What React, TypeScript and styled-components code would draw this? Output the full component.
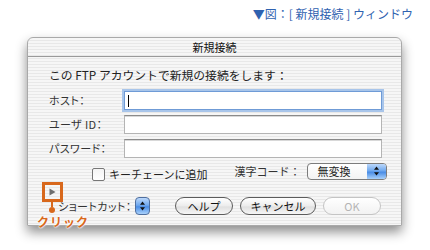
import React from 'react';
import styled, { createGlobalStyle, css } from 'styled-components';

const GlobalStyle = createGlobalStyle`
  html, body {
    margin: 0;
    padding: 0;
    background: #ffffff;
  }
  body {
    font-family: "Noto Sans CJK JP", "Noto Sans", sans-serif;
    color: #222;
  }
`;

const pinstripe = css`
  background: repeating-linear-gradient(
    to bottom,
    #f6f6f6 0,
    #f6f6f6 2px,
    #e8e8e8 2px,
    #e8e8e8 3px
  );
`;

const Page = styled.div`
  position: relative;
  width: 430px;
  height: 250px;
  overflow: hidden;
  padding-top: 6px;
  box-sizing: border-box;
`;

const Caption = styled.div`
  text-align: right;
  padding-right: 17px;
  color: #2f62b0;
  font-size: 12px;
  line-height: 16px;
`;

const Window = styled.div`
  margin: 15px 0 0 27px;
  width: 375px;
  box-sizing: border-box;
  border: 1px solid #a9a9a9;
  border-radius: 6px 6px 0 0;
  box-shadow: 0 6px 12px rgba(0, 0, 0, 0.45);
  ${pinstripe};
`;

const TitleBar = styled.div`
  height: 18px;
  border-bottom: 1px solid #9a9a9a;
  border-radius: 6px 6px 0 0;
  text-align: center;
  font-size: 11px;
  line-height: 18px;
  color: #111;
`;

const Body = styled.div`
  padding: 10px 20px 10px 21px;
  font-size: 11px;
  display: flex;
  flex-direction: column;
`;

const Intro = styled.div`
  font-size: 11.8px;
  line-height: 16px;
`;

const Fields = styled.div`
  margin-top: 8px;
  display: grid;
  grid-template-columns: 75px 258px;
  row-gap: 5px;
  align-items: center;
`;

const Label = styled.div`
  line-height: 19px;
  color: #333;
  font-feature-settings: "palt";
  letter-spacing: 0.4px;
`;

const Field = styled.div<{ $focused?: boolean }>`
  height: 19px;
  box-sizing: border-box;
  background: #fff;
  border: 1px solid #b4b4b4;
  border-top-color: #8a8a8a;
  box-shadow: inset 0 1px 0 #d8d8d8;
  position: relative;
  ${(p) =>
    p.$focused &&
    css`
      border-color: #6f9bd6;
      box-shadow: 0 0 0 2px #a8c5ea;
    `}
`;

const Caret = styled.span`
  position: absolute;
  left: 3px;
  top: 3px;
  width: 1px;
  height: 12px;
  background: #000;
`;

const Options = styled.div`
  margin-top: 4px;
  margin-right: -10px;
  display: flex;
  align-items: center;
  height: 18px;
  white-space: nowrap;

  & > * {
    flex-shrink: 0;
  }
`;

const CheckItem = styled.label`
  display: flex;
  align-items: center;
  gap: 4px;
  margin-left: 43px;
  margin-top: 6px;
`;

const CheckBox = styled.span`
  width: 11px;
  height: 11px;
  border: 1px solid #777;
  border-radius: 2px;
  background: linear-gradient(#f4f4f4, #ffffff);
`;

const CodeLabel = styled.span`
  margin-left: 27px;
  color: #333;
`;

const Popup = styled.div`
  margin-left: 7px;
  width: 80px;
  height: 17px;
  box-sizing: border-box;
  border: 1px solid #7c7c7c;
  border-radius: 4px;
  background: linear-gradient(#ffffff, #f3f3f3);
  display: flex;
  overflow: hidden;
`;

const PopupText = styled.span`
  flex: 1;
  padding-left: 9px;
  line-height: 15px;
`;

const BlueArrows = styled.span<{ $w: number }>`
  width: ${(p) => p.$w}px;
  display: flex;
  align-items: center;
  justify-content: center;
  background: linear-gradient(#bcd8fb 0%, #6fa8ee 45%, #4a8de6 55%, #a9d1fb 100%);
`;

const Footer = styled.div`
  margin-top: 17px;
  display: flex;
  align-items: center;
  height: 18px;
  white-space: nowrap;
`;

const ShortcutLabel = styled.span`
  margin-left: 9px;
  color: #333;
  font-feature-settings: "palt";
  letter-spacing: 0.4px;
`;

const Stepper = styled.span`
  margin-left: 3px;
  width: 15px;
  height: 18px;
  box-sizing: border-box;
  border: 1px solid #4f6f9f;
  border-radius: 4px;
  display: flex;
  align-items: center;
  justify-content: center;
  background: linear-gradient(#bcd8fb 0%, #6fa8ee 45%, #4a8de6 55%, #a9d1fb 100%);
`;

const Buttons = styled.div`
  margin-left: auto;
  display: flex;
  gap: 7px;
`;

const Button = styled.button<{ $w: number; $disabled?: boolean }>`
  width: ${(p) => p.$w}px;
  height: 18px;
  padding: 0;
  border: 1px solid #5c5c5c;
  border-radius: 9px;
  background: linear-gradient(#ffffff 0%, #ececec 50%, #e0e0e0 55%, #f6f6f6 100%);
  font-family: inherit;
  font-size: 11px;
  line-height: 16px;
  color: #111;
  ${(p) =>
    p.$disabled &&
    css`
      border-color: #c4c4c4;
      color: #b4b4b4;
      background: linear-gradient(#ffffff, #f2f2f2);
    `}
`;

const Callout = styled.div`
  position: absolute;
  left: 42px;
  top: 182px;
  width: 48px;
`;

const CalloutBox = styled.div`
  width: 21px;
  height: 20px;
  box-sizing: border-box;
  border: 3px solid #d8681c;
  display: flex;
  align-items: center;
  justify-content: center;
`;

const Stem = styled.div`
  margin-left: 9px;
  width: 2px;
  height: 5px;
  background: #d8681c;
`;

const Dot = styled.div`
  margin-left: 7px;
  width: 6px;
  height: 6px;
  border-radius: 50%;
  background: #d8681c;
`;

const ClickLabel = styled.div`
  margin: 2px 0 0 -5px;
  color: #d8681c;
  font-weight: bold;
  font-size: 12px;
  line-height: 14px;
  letter-spacing: 1px;
  white-space: nowrap;
  text-shadow: 0 0 2px #fff, 0 0 2px #fff, 0 0 2px #fff;
`;

const UpDown = () => (
  <svg width="7" height="10" viewBox="0 0 7 10">
    <path d="M3.5 0.5 L6 3.8 L1 3.8 Z" fill="#111" />
    <path d="M3.5 9.5 L6 6.2 L1 6.2 Z" fill="#111" />
  </svg>
);

const Disclosure = () => (
  <svg width="7" height="8" viewBox="0 0 7 8">
    <path d="M0.5 0.5 L6.5 4 L0.5 7.5 Z" fill="#6e6e6e" />
  </svg>
);

const App: React.FC = () => {
  return (
    <Page>
      <GlobalStyle />
      <Caption>▼図：[ 新規接続 ] ウィンドウ</Caption>
      <Window>
        <TitleBar>新規接続</TitleBar>
        <Body>
          <Intro>この FTP アカウントで新規の接続をします：</Intro>
          <Fields>
            <Label>ホスト：</Label>
            <Field $focused>
              <Caret />
            </Field>
            <Label>ユーザ ID：</Label>
            <Field />
            <Label>パスワード：</Label>
            <Field />
          </Fields>
          <Options>
            <CheckItem>
              <CheckBox />
              キーチェーンに追加
            </CheckItem>
            <CodeLabel>漢字コード：</CodeLabel>
            <Popup>
              <PopupText>無変換</PopupText>
              <BlueArrows $w={19}>
                <UpDown />
              </BlueArrows>
            </Popup>
          </Options>
          <Footer>
            <ShortcutLabel>ショートカット：</ShortcutLabel>
            <Stepper>
              <UpDown />
            </Stepper>
            <Buttons>
              <Button $w={58}>ヘルプ</Button>
              <Button $w={76}>キャンセル</Button>
              <Button $w={58} $disabled>
                OK
              </Button>
            </Buttons>
          </Footer>
        </Body>
      </Window>
      <Callout>
        <CalloutBox>
          <Disclosure />
        </CalloutBox>
        <Stem />
        <Dot />
        <ClickLabel>クリック</ClickLabel>
      </Callout>
    </Page>
  );
};

export default App;
